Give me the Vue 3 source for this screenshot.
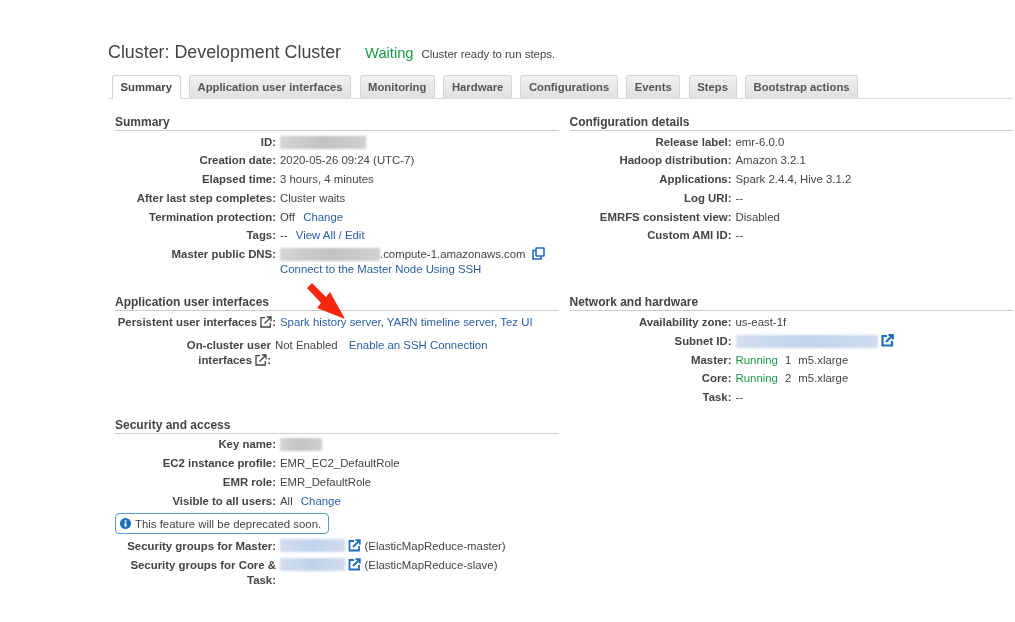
<script setup>
const tabs = ["Summary", "Application user interfaces", "Monitoring", "Hardware", "Configurations", "Events", "Steps", "Bootstrap actions"]
</script>

<template>
  <div class="page">
    <div class="title-row">
      <h1>Cluster: Development Cluster</h1>
      <span class="state">Waiting</span>
      <span class="state-note">Cluster ready to run steps.</span>
    </div>

    <div class="tabs">
      <div v-for="(tab, i) in tabs" :key="tab" class="tab" :class="{ active: i === 0 }">{{ tab }}</div>
    </div>

    <div class="columns">
      <div class="col">
        <section>
          <h2>Summary</h2>
          <div class="row"><label>ID:</label><div><span class="blur grey" style="width: 86px"></span></div></div>
          <div class="row"><label>Creation date:</label><div>2020-05-26 09:24 (UTC-7)</div></div>
          <div class="row"><label>Elapsed time:</label><div>3 hours, 4 minutes</div></div>
          <div class="row"><label>After last step completes:</label><div>Cluster waits</div></div>
          <div class="row"><label>Termination protection:</label><div>Off <a class="ml">Change</a></div></div>
          <div class="row"><label>Tags:</label><div>-- <a class="ml">View All / Edit</a></div></div>
          <div class="row"><label>Master public DNS:</label>
            <div>
              <div class="dns"><span class="blur grey" style="width: 100px"></span>.compute-1.amazonaws.com
                <svg class="copy" width="13" height="13" viewBox="0 0 13 13" fill="none" stroke="#1f6fb8" stroke-width="1.6">
                  <rect x="4" y="1" width="8" height="8" rx="0.5" />
                  <path d="M4 3.5H1v8.500h8V9" />
                </svg>
              </div>
              <a>Connect to the Master Node Using SSH</a>
            </div>
          </div>
        </section>

        <section class="lower">
          <h2>Application user interfaces</h2>
          <svg class="arrow" width="38" height="36" viewBox="0 0 38 36">
            <path d="M0 5 L5 0 L19 14 L23 9 L38 36 L10 25 L14 20 Z" fill="#f5270f" />
          </svg>
          <div class="row"><label>Persistent user interfaces
              <svg class="ext" width="12" height="12" viewBox="0 0 12 12" fill="none" stroke="#444" stroke-width="1.300">
                <path d="M5 1.700H1v9.300h9.300V7" /><path d="M4.500 7.500 10.500 1.500M6.800 1h4.200v4.200" />
              </svg>:</label>
            <div><a>Spark history server</a>, <a>YARN timeline server</a>, <a>Tez UI</a></div>
          </div>
          <div class="row oncluster"><label>On-cluster user<br />interfaces
              <svg class="ext" width="12" height="12" viewBox="0 0 12 12" fill="none" stroke="#444" stroke-width="1.300">
                <path d="M5 1.700H1v9.300h9.300V7" /><path d="M4.500 7.500 10.500 1.500M6.800 1h4.200v4.200" />
              </svg>:</label>
            <div>Not Enabled <a class="ml-wide">Enable an SSH Connection</a></div>
          </div>
        </section>

        <section class="security">
          <h2>Security and access</h2>
          <div class="row"><label>Key name:</label><div><span class="blur grey" style="width: 42px"></span></div></div>
          <div class="row"><label>EC2 instance profile:</label><div>EMR_EC2_DefaultRole</div></div>
          <div class="row"><label>EMR role:</label><div>EMR_DefaultRole</div></div>
          <div class="row"><label>Visible to all users:</label><div>All <a class="ml">Change</a></div></div>
          <div class="notice">
            <svg width="11" height="11" viewBox="0 0 12 12">
              <circle cx="6" cy="6" r="6" fill="#1f6fb8" />
              <rect x="5" y="5" width="2" height="4.500" fill="#fff" />
              <rect x="5" y="2.500" width="2" height="1.700" fill="#fff" />
            </svg>
            This feature will be deprecated soon.
          </div>
          <div class="row"><label>Security groups for Master:</label>
            <div class="sg-val"><span class="blur blue" style="width: 65px"></span>
              <svg class="ext-blue" width="13" height="13" viewBox="0 0 13 13" fill="none" stroke="#1f6fb8" stroke-width="1.800">
                <path d="M6 2H1.500v9.500H11V7" /><path d="M5 8 11 2M7.500 1.200h4.300v4.300" />
              </svg>
              (ElasticMapReduce-master)</div>
          </div>
          <div class="row"><label>Security groups for Core &amp; Task:</label>
            <div class="sg-val"><span class="blur blue" style="width: 65px"></span>
              <svg class="ext-blue" width="13" height="13" viewBox="0 0 13 13" fill="none" stroke="#1f6fb8" stroke-width="1.800">
                <path d="M6 2H1.500v9.500H11V7" /><path d="M5 8 11 2M7.500 1.200h4.300v4.300" />
              </svg>
              (ElasticMapReduce-slave)</div>
          </div>
        </section>
      </div>

      <div class="col right">
        <section>
          <h2>Configuration details</h2>
          <div class="row"><label>Release label:</label><div>emr-6.0.0</div></div>
          <div class="row"><label>Hadoop distribution:</label><div>Amazon 3.2.1</div></div>
          <div class="row"><label>Applications:</label><div>Spark 2.4.4, Hive 3.1.2</div></div>
          <div class="row"><label>Log URI:</label><div>--</div></div>
          <div class="row"><label>EMRFS consistent view:</label><div>Disabled</div></div>
          <div class="row"><label>Custom AMI ID:</label><div>--</div></div>
          <div class="row"><label>&nbsp;</label><div>&nbsp;<br />&nbsp;</div></div>
        </section>

        <section class="lower">
          <h2>Network and hardware</h2>
          <div class="row"><label>Availability zone:</label><div>us-east-1f</div></div>
          <div class="row"><label>Subnet ID:</label>
            <div class="sg-val"><span class="blur blue subnet" style="width: 142px"></span>
              <svg class="ext-blue" width="13" height="13" viewBox="0 0 13 13" fill="none" stroke="#1f6fb8" stroke-width="2.200">
                <path d="M6 2H1.500v9.500H11V7" /><path d="M5 8 11 2M7.500 1.200h4.300v4.300" />
              </svg>
            </div>
          </div>
          <div class="row"><label>Master:</label><div><span class="run">Running</span><span class="count">1</span><span class="count">m5.xlarge</span></div></div>
          <div class="row"><label>Core:</label><div><span class="run">Running</span><span class="count">2</span><span class="count">m5.xlarge</span></div></div>
          <div class="row"><label>Task:</label><div>--</div></div>
        </section>
      </div>
    </div>
  </div>
</template>

<style scoped>
.page {
  width: 1015px;
  height: 622px;
  box-sizing: border-box;
  overflow: hidden;
  padding: 41px 2px 0 108px;
  background: #fff;
  font-family: "Liberation Sans", Arial, sans-serif;
  font-size: 11.4px;
  color: #444;
  filter: blur(0.35px);
}

.title-row {
  display: flex;
  align-items: baseline;
  height: 34px;
}

h1 {
  margin: 0;
  font-size: 17.850px;
  font-weight: 400;
  line-height: 22px;
  color: #444;
}

.state {
  margin-left: 24px;
  font-size: 14.700px;
  color: #1d9a48;
}

.state-note {
  margin-left: 8px;
}

.tabs {
  display: flex;
  gap: 8.500px;
  height: 23px;
  padding-left: 4px;
  border-bottom: 1px solid #ddd;
}

.tab {
  padding: 0 7.500px;
  height: 23px;
  box-sizing: border-box;
  line-height: 23px;
  font-size: 11.300px;
  font-weight: 700;
  color: #555;
  background: linear-gradient(#f1f1f1, #e0e0e0);
  border: 1px solid #d5d5d5;
  border-bottom: 0;
  border-radius: 3px 3px 0 0;
}

.tab.active {
  background: #fff;
  height: 24px;
  color: #444;
}

.columns {
  display: flex;
  gap: 11px;
  padding-left: 7px;
}

.col {
  width: 444px;
}

section {
  position: relative;
}

h2 {
  margin: 0 0 1.500px;
  padding-top: 15px;
  height: 16px;
  line-height: 16px;
  font-size: 12px;
  font-weight: 700;
  color: #444;
  border-bottom: 1px solid #ccc;
}

.lower h2 {
  margin-bottom: 2.500px;
}

.row {
  display: grid;
  grid-template-columns: 161px 1fr;
  column-gap: 4px;
  line-height: 14.750px;
  padding: 2px 0;
}

.right .row {
  grid-template-columns: 162px 1fr;
}

label {
  font-weight: 700;
  text-align: right;
  color: #444;
}

a {
  color: #2a5ea8;
}

.ml {
  margin-left: 5px;
}

.ml-wide {
  margin-left: 8px;
}

.blur {
  display: inline-block;
  height: 13px;
  vertical-align: -3px;
  filter: blur(1px);
}

.grey {
  background: linear-gradient(90deg, #d4d4d4, #c2c2c2 50%, #d0d0d0);
}

.blue {
  background: linear-gradient(90deg, #d2def0, #c0d2ea 50%, #cfdcee);
}

.subnet {
  margin-top: 1px;
}

.copy {
  vertical-align: -2px;
  margin-left: 3px;
}

.ext {
  vertical-align: -2px;
}

.arrow {
  position: absolute;
  left: 192px;
  top: 4px;
}

.oncluster {
  padding-top: 6.600px;
  grid-template-columns: 156px 1fr;
}

.security {
  padding-top: 32px;
}

.notice {
  display: flex;
  width: fit-content;
  align-items: center;
  gap: 4px;
  height: 21px;
  box-sizing: border-box;
  margin: 3px 0;
  padding: 0 7px 0 4px;
  border: 1px solid #5b9bd5;
  border-radius: 4px;
}

.sg-val {
  display: flex;
  align-items: flex-start;
  gap: 3.500px;
}

.ext-blue {
  margin: 0 0 0 -0.500px;
  flex: none;
}

.run {
  color: #1d9a48;
}

.count {
  margin-left: 7px;
}
</style>
